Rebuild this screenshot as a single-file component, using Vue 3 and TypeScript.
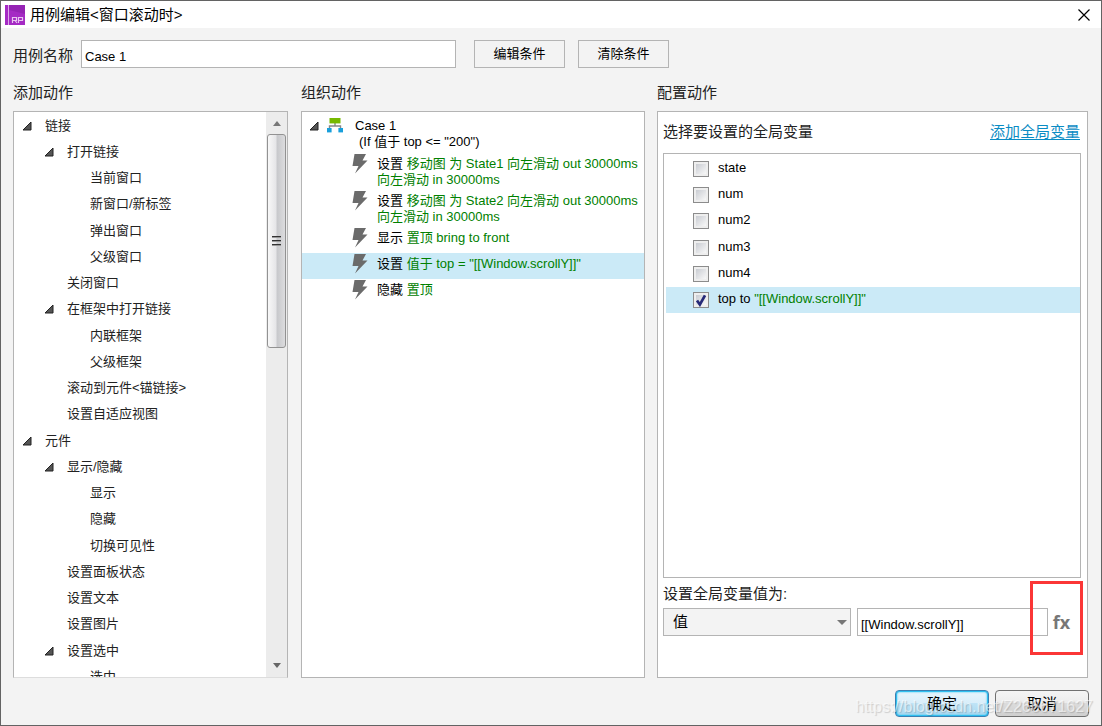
<script setup lang="ts">
import { ref } from 'vue'

interface TreeRow {
  label: string
  level: 1 | 2 | 3
  open?: boolean
}

interface CaseAction {
  verb: string
  detail: string
  selected?: boolean
}

interface GlobalVariable {
  name: string
  value?: string
  checked: boolean
}

const caseName = ref('Case 1')
const expression = ref('[[Window.scrollY]]')
const valueKind = ref('值')

const tree: TreeRow[] = [
  { label: '链接', level: 1, open: true },
  { label: '打开链接', level: 2, open: true },
  { label: '当前窗口', level: 3 },
  { label: '新窗口/新标签', level: 3 },
  { label: '弹出窗口', level: 3 },
  { label: '父级窗口', level: 3 },
  { label: '关闭窗口', level: 2 },
  { label: '在框架中打开链接', level: 2, open: true },
  { label: '内联框架', level: 3 },
  { label: '父级框架', level: 3 },
  { label: '滚动到元件<锚链接>', level: 2 },
  { label: '设置自适应视图', level: 2 },
  { label: '元件', level: 1, open: true },
  { label: '显示/隐藏', level: 2, open: true },
  { label: '显示', level: 3 },
  { label: '隐藏', level: 3 },
  { label: '切换可见性', level: 3 },
  { label: '设置面板状态', level: 2 },
  { label: '设置文本', level: 2 },
  { label: '设置图片', level: 2 },
  { label: '设置选中', level: 2, open: true },
  { label: '选中', level: 3 },
]

const actions: CaseAction[] = [
  { verb: '设置', detail: '移动图 为 State1 向左滑动 out 30000ms 向左滑动 in 30000ms' },
  { verb: '设置', detail: '移动图 为 State2 向左滑动 out 30000ms 向左滑动 in 30000ms' },
  { verb: '显示', detail: '置顶 bring to front' },
  { verb: '设置', detail: '值于 top = "[[Window.scrollY]]"', selected: true },
  { verb: '隐藏', detail: '置顶' },
]

const variables = ref<GlobalVariable[]>([
  { name: 'state', checked: false },
  { name: 'num', checked: false },
  { name: 'num2', checked: false },
  { name: 'num3', checked: false },
  { name: 'num4', checked: false },
  { name: 'top to', value: '"[[Window.scrollY]]"', checked: true },
])
</script>

<template>
  <div class="window">
    <header class="titlebar">
      <svg class="logo" viewBox="0 0 20 20" aria-hidden="true">
        <rect width="20" height="20" fill="#a52ac4" />
        <path d="M4 0H20V9L4 5Z" fill="#9523b4" />
        <rect x="3" width="1" height="20" fill="#dda6ea" />
        <path d="M7.5 18V12.5H11.5V15.5H7.5M10 15.5L12 18M13.5 18V12.5H17.5V15.5H13.5" fill="none" stroke="#e9c5f1" stroke-width="1.2" />
      </svg>
      <h1>用例编辑&lt;窗口滚动时&gt;</h1>
      <button class="close" type="button" aria-label="关闭">
        <svg viewBox="0 0 12 12"><path d="M0.5 0.5L11.5 11.5M11.5 0.5L0.5 11.5" stroke="#000" stroke-width="1.2" /></svg>
      </button>
    </header>

    <div class="name-row">
      <label for="case-name">用例名称</label>
      <input id="case-name" v-model="caseName" class="field name-field" type="text" />
      <button class="flat" type="button">编辑条件</button>
      <button class="flat" type="button">清除条件</button>
    </div>

    <main class="columns">
      <section class="column">
        <h2>添加动作</h2>
        <div class="panel tree-panel">
          <ul class="tree">
            <li v-for="(row, i) in tree" :key="i" :class="'level-' + row.level">
              <svg v-if="row.open" class="twisty" viewBox="0 0 10 10" aria-hidden="true"><path d="M9 1V9H1Z" fill="#555" stroke="#222" /></svg>
              <span>{{ row.label }}</span>
            </li>
          </ul>
          <div class="scrollbar" aria-hidden="true">
            <svg class="arrow" viewBox="0 0 8 5"><path d="M0 5L4 0L8 5Z" fill="#777" /></svg>
            <div class="track">
              <div class="thumb"><i></i><i></i><i></i></div>
            </div>
            <svg class="arrow" viewBox="0 0 8 5"><path d="M0 0H8L4 5Z" fill="#666" /></svg>
          </div>
        </div>
      </section>

      <section class="column">
        <h2>组织动作</h2>
        <div class="panel case-panel">
          <div class="case-head">
            <svg class="twisty" viewBox="0 0 10 10" aria-hidden="true"><path d="M9 1V9H1Z" fill="#555" stroke="#222" /></svg>
            <svg class="flow" viewBox="0 0 16 15" aria-hidden="true">
              <path d="M8 5V8M2.5 11V8H13.5V11" fill="none" stroke="#888" stroke-width="1.4" />
              <rect x="2.5" width="11" height="5.4" fill="#76b900" />
              <rect y="10" width="4.6" height="4.4" fill="#189fdb" />
              <rect x="11.4" y="10" width="4.6" height="4.4" fill="#189fdb" />
            </svg>
            <div>
              <div>Case 1</div>
              <div class="condition">(If 值于 top &lt;= "200")</div>
            </div>
          </div>
          <ul class="actions">
            <li v-for="(action, i) in actions" :key="i" :class="{ selected: action.selected }">
              <svg class="bolt" viewBox="0 0 16 20" aria-hidden="true"><path d="M2.5 0H14L10.5 6.5H15.5L3 19.5L6.5 12H0.5Z" fill="#6b6b6b" /></svg>
              <p><span>{{ action.verb }}</span> <span class="green">{{ action.detail }}</span></p>
            </li>
          </ul>
        </div>
      </section>

      <section class="column">
        <h2>配置动作</h2>
        <div class="panel config-panel">
          <div class="config-head">
            <span>选择要设置的全局变量</span>
            <a href="#">添加全局变量</a>
          </div>
          <ul class="variables">
            <li v-for="item in variables" :key="item.name" :class="{ selected: item.checked }">
              <label>
                <input v-model="item.checked" type="checkbox" />
                <span>{{ item.name }} <span v-if="item.value" class="green">{{ item.value }}</span></span>
              </label>
            </li>
          </ul>
          <label class="value-label" for="value-kind">设置全局变量值为:</label>
          <div class="value-row">
            <div class="select-wrap">
              <select id="value-kind" v-model="valueKind">
                <option>值</option>
              </select>
              <svg class="caret" viewBox="0 0 10 5" aria-hidden="true"><path d="M0 0H10L5 5Z" fill="#777" /></svg>
            </div>
            <input v-model="expression" class="field value-field" type="text" aria-label="变量值" />
            <div class="fx-wrap">
              <button class="fx" type="button">fx</button>
              <div class="highlight"></div>
            </div>
          </div>
        </div>
      </section>
    </main>

    <footer class="footer">
      <button class="dialog-button primary" type="button">确定</button>
      <button class="dialog-button" type="button">取消</button>
      <span class="watermark">https://blog.csdn.net/Z266671627</span>
    </footer>
  </div>
</template>

<style>
body {
  margin: 0;
}
</style>

<style scoped>
* {
  box-sizing: border-box;
}

.window {
  display: flex;
  flex-direction: column;
  height: 100vh;
  min-height: 480px;
  border: 1px solid #636363;
  background: #f3f3f3;
  color: #222;
  font: 13px/16px "Liberation Sans", "Noto Sans CJK SC", sans-serif;
}

button,
input,
select {
  font: inherit;
  color: #000;
}

ul,
p {
  margin: 0;
  padding: 0;
  list-style: none;
}

.titlebar {
  display: flex;
  align-items: center;
  height: 27px;
  padding: 0 11px 0 4px;
  background: #fff;
}

.logo {
  width: 20px;
  height: 20px;
}

h1 {
  flex: 1;
  margin: 0 0 0 5px;
  color: #000;
  font-size: 15px;
  font-weight: 400;
  line-height: 20px;
}

.close {
  display: flex;
  padding: 0;
  border: 0;
  background: none;
}

.close svg {
  width: 12px;
  height: 12px;
}

.name-row {
  display: flex;
  align-items: center;
  padding: 12px 12px 0;
}

.name-row label {
  width: 68px;
  padding-top: 4px;
  font-size: 15px;
  line-height: 20px;
}

.field {
  height: 28px;
  padding: 4px 3px 0;
  border: 1px solid #b4b4b4;
  border-radius: 0;
  outline: 0;
  background: #fff;
}

.name-field {
  width: 375px;
  margin-right: 18px;
}

.flat {
  width: 91px;
  height: 28px;
  margin-right: 13px;
  padding: 0;
  border: 1px solid #b4b4b4;
  background: #f3f3f3;
}

.columns {
  display: grid;
  flex: 1;
  grid-template-columns: 276fr 344fr 431fr;
  gap: 12px;
  min-height: 0;
  padding: 15px 13px 0 12px;
}

.column {
  display: flex;
  flex-direction: column;
  min-width: 0;
  min-height: 0;
}

h2 {
  margin: 0 0 8px;
  font-size: 15px;
  font-weight: 400;
  line-height: 20px;
}

.panel {
  flex: 1;
  min-height: 0;
  border: 1px solid #b4b4b4;
  background: #fff;
}

.tree-panel {
  display: flex;
  margin-right: 1px;
  border-bottom-color: #ddd;
}

.tree {
  flex: 1;
  overflow: hidden;
}

.tree li {
  display: flex;
  align-items: center;
  height: 26px;
  padding-top: 1px;
}

.tree li:nth-child(4n) {
  height: 27px;
}

.tree span {
  flex: 1;
}

.twisty {
  flex: none;
  width: 10px;
  height: 10px;
  margin-right: 13px;
}

.tree .level-1 {
  padding-left: 8px;
}

.tree .level-2 {
  padding-left: 53px;
}

.tree .level-2 .twisty {
  margin-left: -23px;
}

.tree .level-3 {
  padding-left: 76px;
}

.scrollbar {
  display: flex;
  flex-direction: column;
  align-items: center;
  width: 21px;
  padding: 9px 1px;
  background: #ececec;
}

.arrow {
  flex: none;
  width: 8px;
  height: 5px;
}

.track {
  flex: 1;
  width: 19px;
  padding: 8px 0;
}

.thumb {
  display: flex;
  flex-direction: column;
  align-items: center;
  justify-content: center;
  gap: 2px;
  height: 41%;
  border: 1px solid #929292;
  border-radius: 3px;
  background: linear-gradient(90deg, #f8f8f8, #e6e6e8 45%, #c8c9cc 55%, #dcdcde);
}

.thumb i {
  width: 9px;
  height: 2px;
  border-bottom: 1px solid #999;
  background: #333;
}

.case-panel {
  color: #000;
}

.case-head {
  display: flex;
  padding: 6px 0 3px 7px;
}

.case-head .twisty {
  margin: 3px 8px 0 0;
}

.flow {
  width: 16px;
  height: 15px;
  margin-right: 12px;
}

.condition {
  padding-left: 4px;
}

.actions li {
  display: flex;
  min-height: 26px;
  padding: 3px 4px 2px 50px;
}

.bolt {
  flex: none;
  width: 16px;
  height: 20px;
  margin: -2px 9px -2px 0;
}

.green {
  color: #008000;
}

.selected {
  background: #cbeaf7;
}

.config-panel {
  display: flex;
  flex-direction: column;
  padding: 0 5px;
}

.config-head {
  display: flex;
  justify-content: space-between;
  padding: 10px 2px 11px 0;
  font-size: 15px;
  line-height: 20px;
}

.config-head a {
  color: #0a8cc4;
  text-underline-offset: 2px;
}

.variables {
  flex: 1;
  min-height: 0;
  margin-right: 1px;
  padding: 2px 0 0 2px;
  overflow: hidden;
  border: 1px solid #b4b4b4;
  color: #000;
}

.variables li:nth-child(3) {
  padding-bottom: 1px;
}

.variables label {
  display: flex;
  gap: 9px;
  height: 26px;
  padding: 4px 0 0 27px;
}

.variables input {
  width: 16px;
  height: 16px;
  margin: 1px 0 0;
  appearance: none;
  border: 1px solid #8c8c8c;
  background: linear-gradient(135deg, #c9ccd2, #f8f8f8) content-box, #eee;
  padding: 2px;
}

.variables input:checked {
  background: url("data:image/svg+xml,%3Csvg xmlns='http://www.w3.org/2000/svg' viewBox='0 0 14 14'%3E%3Cpath d='M3.5 7.5L6 11L10.5 3' fill='none' stroke='%23262a78' stroke-width='2.4'/%3E%3C/svg%3E") border-box, linear-gradient(135deg, #c9ccd2, #f8f8f8) content-box, #eee;
}

.value-label {
  margin: 6px 0 4px;
  font-size: 15px;
  line-height: 20px;
}

.value-row {
  display: grid;
  grid-template-columns: 188fr 197fr 34px;
  margin-bottom: 41px;
}

.select-wrap {
  position: relative;
}

select {
  display: block;
  width: 100%;
  height: 28px;
  padding: 0 9px;
  appearance: none;
  border: 1px solid #b4b4b4;
  border-radius: 0;
  background: #f3f3f3;
  font-size: 15px;
}

.caret {
  position: absolute;
  top: 12px;
  right: 4px;
  width: 10px;
  height: 5px;
  pointer-events: none;
}

.value-field {
  min-width: 0;
  margin-left: 6px;
}

.fx-wrap {
  position: relative;
}

.fx {
  width: 27px;
  height: 28px;
  padding: 0;
  border: 0;
  background: none;
  color: #777;
  font: 700 18px/28px "Open Sans", sans-serif;
}

.highlight {
  position: absolute;
  top: -27px;
  left: -18px;
  width: 53px;
  height: 74px;
  border: 3px solid #fb3636;
  pointer-events: none;
}

.footer {
  position: relative;
  display: flex;
  justify-content: flex-end;
  gap: 6px;
  padding: 12px 12px 8px;
}

.dialog-button {
  width: 94px;
  height: 27px;
  padding: 0;
  border: 1px solid #707070;
  border-radius: 4px;
  background: linear-gradient(#f4f4f4, #ebebeb 50%, #dcdcdc 50%, #cfcfcf);
  font-size: 15px;
}

.primary {
  border-color: #3c7fb1;
  background: linear-gradient(#e8f5fc, #d8eefa 50%, #bee3f6 50%, #a9d8f0);
  box-shadow: inset 0 0 0 1px #30c0f0, inset 0 0 2px 1px #30c0f0;
}

.watermark {
  position: absolute;
  right: 8px;
  bottom: 8px;
  color: rgba(255, 255, 255, 0.6);
  font-size: 16px;
  line-height: 20px;
  text-shadow: 1px 1px 1px rgba(0, 0, 0, 0.16);
  pointer-events: none;
}
</style>
